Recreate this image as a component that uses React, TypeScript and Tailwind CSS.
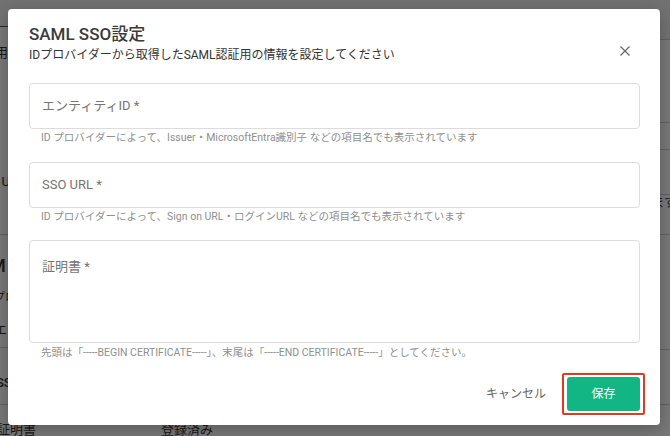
import React from "react";

function LeftColumn() {
  return (
    <div className="flex flex-col text-[#333] text-[13px] leading-[16px]">
      <div className="h-[27px] border-b border-[#555] bg-[#f3f3f3]" />
      <div className="h-[208px] border-b border-[#ccc] flex flex-col">
        <div className="mt-[18px] ml-[-18px]">利用</div>
        <div className="mt-[41px] ml-[-17px]">エ</div>
        <div className="mt-[56px] ml-[-26px]">SSO URL</div>
      </div>
      <div className="h-[113px] border-b border-[#ccc] flex flex-col">
        <div className="mt-[20px] ml-[-10px] text-[18px] leading-[22px] font-medium">M</div>
        <div className="mt-[13px] ml-[-6px] text-[11px]">プロ</div>
        <div className="mt-[16px] ml-[-6px]">エン</div>
      </div>
      <div className="h-[57px] border-b border-[#ccc] flex flex-col">
        <div className="mt-[27px] ml-[-4px] font-medium">SSO</div>
      </div>
      <div className="h-[31px] flex items-start pt-[17px]">
        <span className="ml-[-3px]">証明書</span>
        <span className="ml-[125px]">登録済み</span>
      </div>
    </div>
  );
}

function RightColumn() {
  return (
    <div className="flex flex-col text-[#333] text-[12px] leading-[16px]">
      <div className="h-[40px] border-b border-[#ccc] bg-[#f3f3f3]" />
      <div className="h-[83px] border-b border-[#ccc]" />
      <div className="h-[27px] border-b border-[#ccc]" />
      <div className="h-[45px] border-b border-[#ccc]" />
      <div className="h-[40px] border-b border-[#ccc] flex justify-end">
        <span className="mt-[0px] mr-[-6px]">されています</span>
      </div>
      <div className="h-[115px] border-b border-[#ccc]" />
      <div className="h-[55px] border-b border-[#ccc]" />
      <div className="flex-1" />
    </div>
  );
}

function Field({
  label,
  help,
  tall,
}: {
  label: string;
  help: string;
  tall?: boolean;
}) {
  return (
    <div className="flex flex-col">
      {tall ? (
        <div className="h-[103px] border border-[#dcdcdc] rounded-[4px] px-[12px] pt-[13px]">
          <span className="text-[13px] leading-[20px] text-[#757575]">{label}</span>
        </div>
      ) : (
        <div className="h-[46px] border border-[#dcdcdc] rounded-[4px] px-[12px] flex items-center">
          <span className="text-[13px] leading-[20px] text-[#757575]">{label}</span>
        </div>
      )}
      <div
        className={`${tall ? "mt-[2px]" : "mt-[1px]"} pl-[12px] text-[10.5px] leading-[16px] text-[#8f8f8f] whitespace-nowrap`}
      >
        {help}
      </div>
    </div>
  );
}

export default function App() {
  return (
    <div className="relative w-[670px] h-[436px] overflow-hidden bg-white font-['Roboto','Noto_Sans_CJK_JP',sans-serif]">
      <div className="grid grid-cols-2 h-full">
        <LeftColumn />
        <RightColumn />
      </div>
      <div className="absolute inset-0 bg-black/[0.53]" />
      <div className="absolute left-[8px] top-[9px] w-[652px] h-[416px] bg-white rounded-[4px] shadow-[0_4px_16px_rgba(0,0,0,0.25)] pt-[13px] pl-[21px] pr-[20px] flex flex-col">
        <button className="absolute right-[30px] top-[37px] w-[10px] h-[10px] flex items-center justify-center">
          <svg width="10" height="10" viewBox="0 0 10 10">
            <path d="M0.5 0.5 L9.5 9.5 M9.5 0.5 L0.5 9.5" stroke="#666" strokeWidth="1.2" fill="none" />
          </svg>
        </button>
        <div className="text-[17px] leading-[24px] font-medium text-[#3a3a3a]">SAML SSO設定</div>
        <div className="text-[12px] leading-[18px] text-[#333]">
          IDプロバイダーから取得したSAML認証用の情報を設定してください
        </div>
        <div className="mt-[19px] flex flex-col">
          <Field
            label="エンティティID *"
            help="ID プロバイダーによって、Issuer・MicrosoftEntra識別子 などの項目名でも表示されています"
          />
          <div className="mt-[16px]">
            <Field
              label="SSO URL *"
              help="ID プロバイダーによって、Sign on URL・ログインURL などの項目名でも表示されています"
            />
          </div>
          <div className="mt-[15px]">
            <Field
              tall
              label="証明書 *"
              help="先頭は「-----BEGIN CERTIFICATE-----」、末尾は「-----END CERTIFICATE-----」としてください。"
            />
          </div>
        </div>
        <div className="mt-[12px] flex items-center justify-end mr-[-5px]">
          <button className="text-[12px] leading-[18px] text-[#666] mr-[16px]">キャンセル</button>
          <div className="border-2 border-[#e5391f] rounded-[2px] px-[3px] py-[2px]">
            <button className="w-[73px] h-[34px] rounded-[3px] bg-[#12b584] text-white text-[12px] flex items-center justify-center">
              保存
            </button>
          </div>
        </div>
      </div>
    </div>
  );
}
